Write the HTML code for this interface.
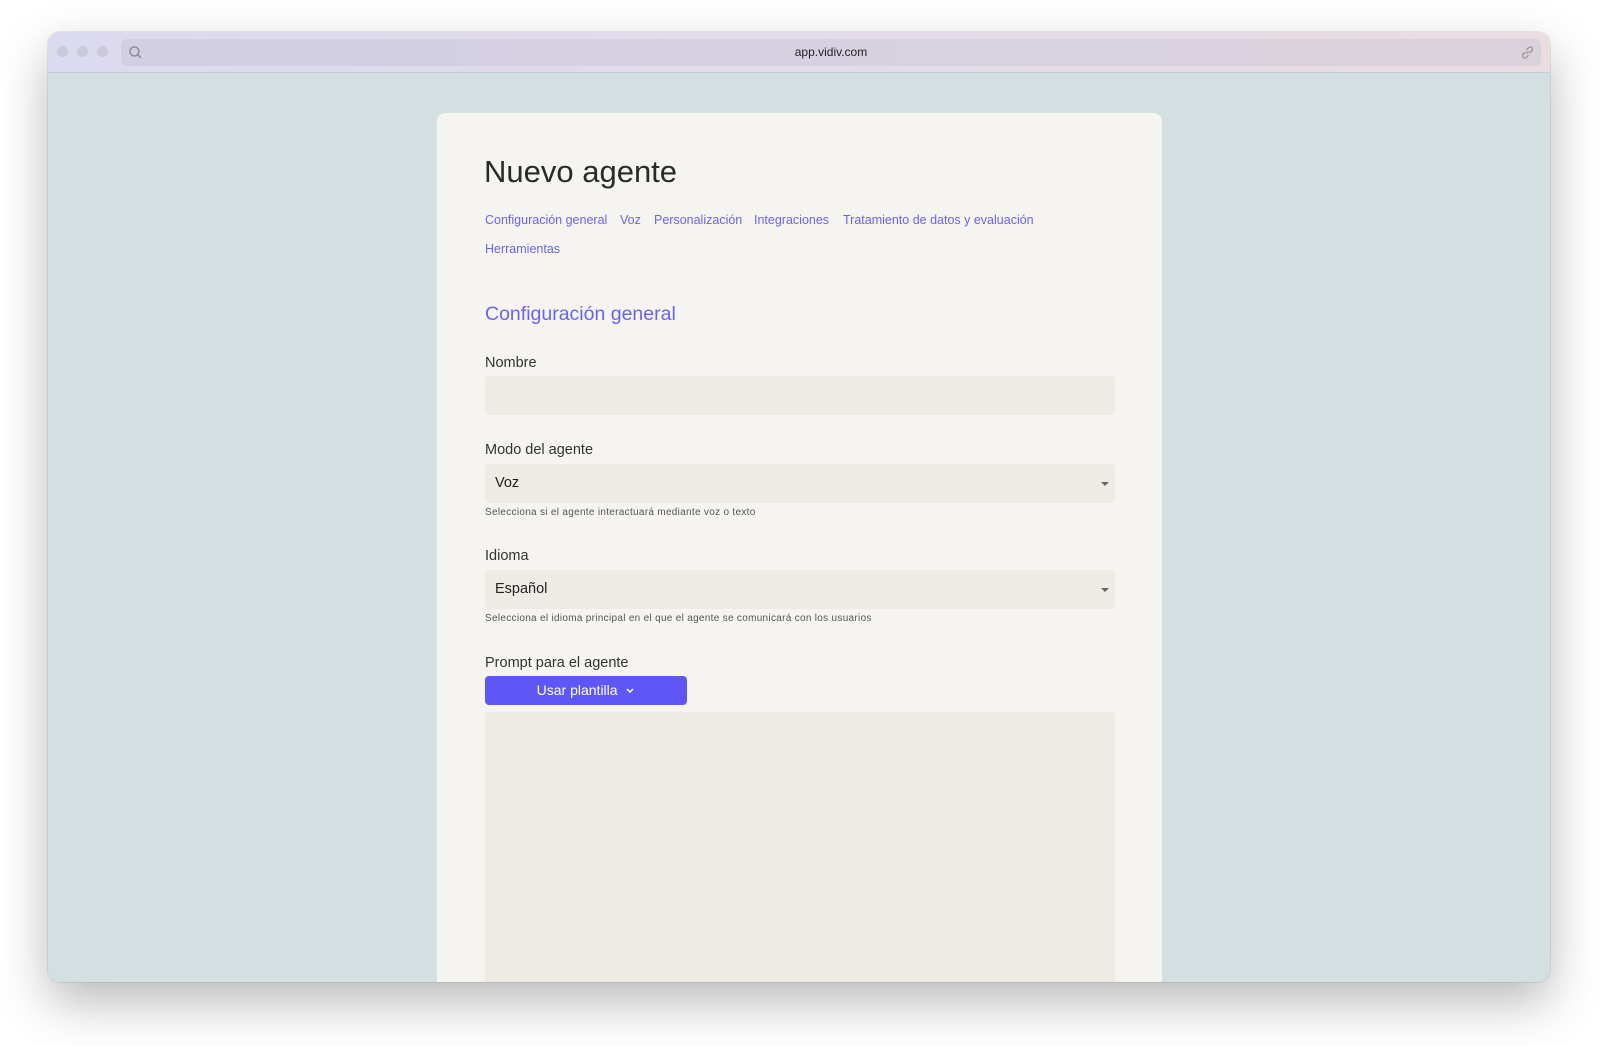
<!DOCTYPE html>
<html><head><meta charset="utf-8"><style>
body{margin:0;width:1600px;height:1046px;background:#fff;font-family:"Liberation Sans",sans-serif;overflow:hidden;position:relative}
.win{position:absolute;left:48px;top:32px;width:1502px;height:950px;border-radius:12px;overflow:hidden;box-shadow:0 20px 50px rgba(0,0,0,.28),0 0 0 1px rgba(0,0,0,.08)}
.bar{position:absolute;left:0;top:0;right:0;height:40px;background:linear-gradient(90deg,#dcdaf0,#e9dde2);border-bottom:1px solid #c9c9d8}
.dot{position:absolute;top:14px;width:11px;height:11px;border-radius:50%;background:#cbc9dc}
.url{position:absolute;left:73px;top:7px;right:9px;height:27px;border-radius:6px;background:rgba(180,175,200,.25);font-size:12px;color:#222;text-align:center;line-height:27px}
.content{position:absolute;top:41px;left:0;right:0;bottom:0;background:#d3dfe0}
.card{position:absolute;left:389px;top:40px;width:725px;height:920px;background:#f5f4f0;border-radius:8px}
.a{position:absolute}
.in{position:absolute;left:485px;width:630px;height:39px;background:#edebe4;border-radius:4px;font-size:14.5px;color:#222;line-height:39px;text-indent:10px}
.lab{position:absolute;left:485px;font-size:14.5px;color:#333;line-height:16px}
.help{position:absolute;left:485px;font-size:10px;color:#555;letter-spacing:.3px;line-height:12px}
.tab{position:absolute;font-size:12.5px;color:#6b63f0;line-height:14px}
.caret{position:absolute;right:6px;top:18px;border-left:4px solid transparent;border-right:4px solid transparent;border-top:4px solid #666}
</style></head><body>
<div class="win">
<div class="bar"><div class="dot" style="left:9px"></div><div class="dot" style="left:29px"></div><div class="dot" style="left:49px"></div>
<div class="url"><svg style="position:absolute;left:7px;top:6px" width="15" height="15" viewBox="0 0 14 14"><circle cx="6" cy="6" r="4.2" fill="none" stroke="#888" stroke-width="1.3"/><line x1="9" y1="9" x2="12" y2="12" stroke="#888" stroke-width="1.3"/></svg>app.vidiv.com
<svg style="position:absolute;right:6px;top:6px" width="15" height="15" viewBox="0 0 14 14" fill="none" stroke="#999" stroke-width="1.3"><path d="M6 8l2-2M5 6.5l-2 2a2 2 0 003 3l2-2M9 7.5l2-2a2 2 0 00-3-3l-2 2"/></svg></div></div>
<div class="content"><div class="card"></div></div>
</div>
<div class="a" style="left:484px;top:154px;font-size:31px;color:#2a2a2a;line-height:36px">Nuevo agente</div>
<div class="tab" style="left:485px;top:213px">Configuración general</div>
<div class="tab" style="left:620px;top:213px">Voz</div>
<div class="tab" style="left:654px;top:213px">Personalización</div>
<div class="tab" style="left:754px;top:213px">Integraciones</div>
<div class="tab" style="left:843px;top:213px">Tratamiento de datos y evaluación</div>
<div class="tab" style="left:485px;top:242px">Herramientas</div>
<div class="a" style="left:485px;top:303px;font-size:19.5px;color:#6b63f0;line-height:22px">Configuración general</div>
<div class="lab" style="top:355px">Nombre</div>
<div class="in" style="top:376px"></div>
<div class="lab" style="top:442px">Modo del agente</div>
<div class="in" style="top:464px">Voz<div class="caret"></div></div>
<div class="help" style="top:507px">Selecciona si el agente interactuará mediante voz o texto</div>
<div class="lab" style="top:548px">Idioma</div>
<div class="in" style="top:570px">Español<div class="caret"></div></div>
<div class="help" style="top:613px">Selecciona el idioma principal en el que el agente se comunicará con los usuarios</div>
<div class="lab" style="top:655px">Prompt para el agente</div>
<div class="a" style="left:485px;top:676px;width:202px;height:29px;background:#5f57f5;border-radius:4px;color:#fff;font-size:14px;text-align:center;line-height:29px">Usar plantilla &nbsp;<svg width="10" height="8" viewBox="0 0 10 8"><path d="M2 2l3 3 3-3" stroke="#fff" stroke-width="1.5" fill="none"/></svg></div>
<div class="in" style="top:712px;height:270px;border-radius:4px 4px 0 0"></div>
</body></html>
